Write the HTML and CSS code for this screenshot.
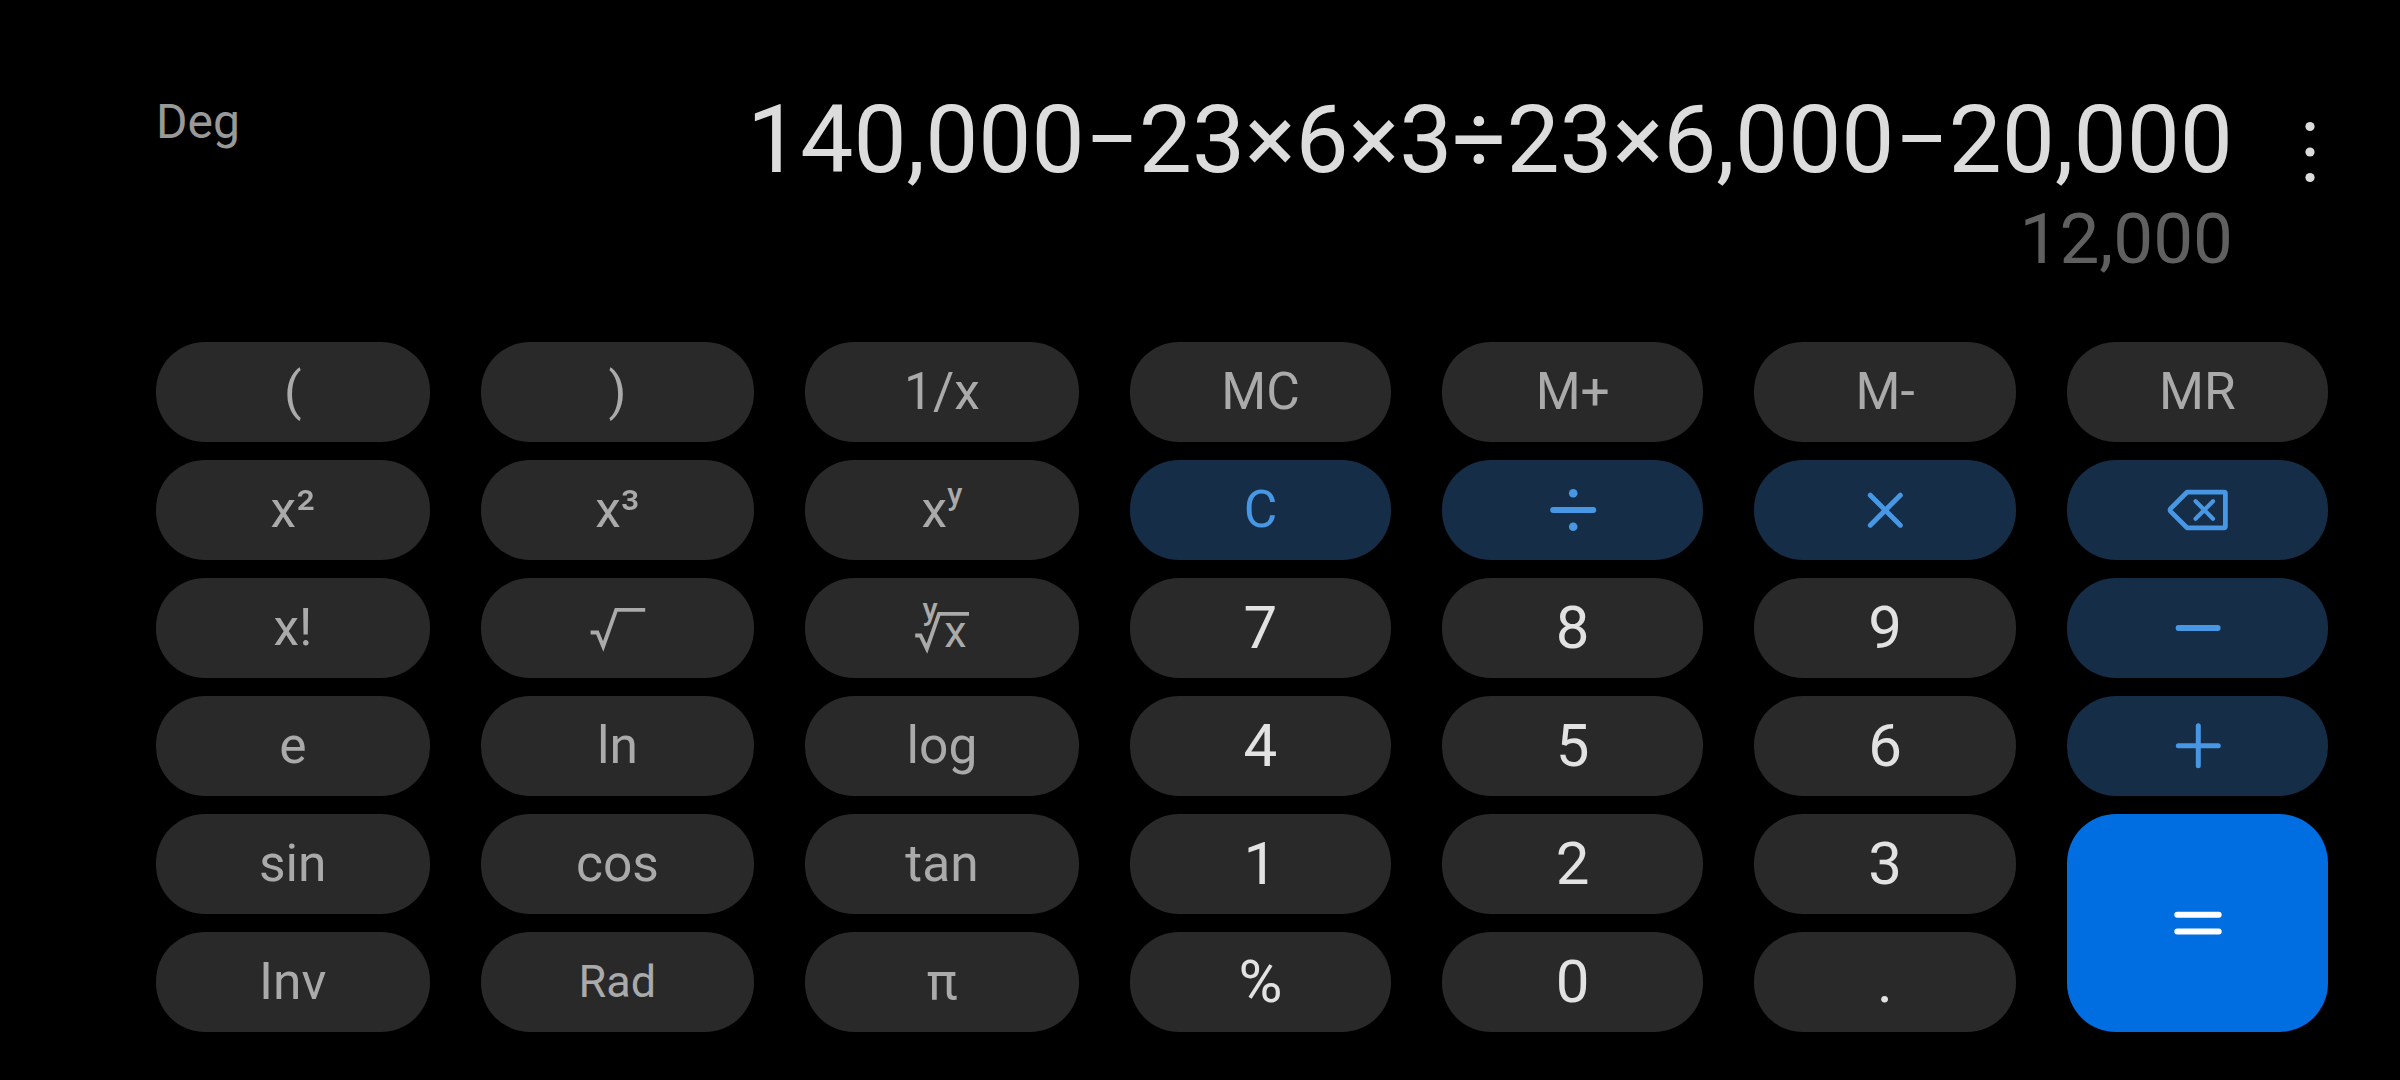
FILE: index.html
```html
<!DOCTYPE html>
<html lang="en">
<head>
  <meta charset="UTF-8">
  <meta name="viewport" content="width=device-width, initial-scale=1.0">
  <title>Calculator</title>
  <link rel="stylesheet" href="styles.css">
</head>
<body>
  <div class="calculator">
    <div class="display">
      <div class="mode">Deg</div>
      <div class="screen">
        <div class="expression">140,000−23×6×3÷23×6,000−20,000</div>
        <div class="result">12,000</div>
      </div>
      <button class="menu" aria-label="More options">
        <svg width="12" height="62" viewBox="0 0 12 62">
          <circle cx="6" cy="5.5" r="4.6"/>
          <circle cx="6" cy="31" r="4.6"/>
          <circle cx="6" cy="56.5" r="4.6"/>
        </svg>
      </button>
    </div>

    <div class="keys">
      <button class="key">(</button>
      <button class="key">)</button>
      <button class="key">1/x</button>
      <button class="key">MC</button>
      <button class="key">M+</button>
      <button class="key">M-</button>
      <button class="key">MR</button>

      <button class="key">x²</button>
      <button class="key">x³</button>
      <button class="key"><span>x<sup class="power">y</sup></span></button>
      <button class="key operator">C</button>
      <button class="key operator" aria-label="Divide">
        <svg class="icon" viewBox="0 0 64 64">
          <path d="M12.2 32h40"/>
          <circle class="dot" cx="32.2" cy="15.2" r="4.3"/>
          <circle class="dot" cx="32.2" cy="48.8" r="4.3"/>
        </svg>
      </button>
      <button class="key operator" aria-label="Multiply">
        <svg class="icon thin" viewBox="0 0 64 64">
          <path d="M17.3 17.2l30 30M47.3 17.2l-30 30"/>
        </svg>
      </button>
      <button class="key operator" aria-label="Backspace">
        <svg class="icon backspace" viewBox="0 0 64 64">
          <path d="M22 14.2h37.2a1.2 1.2 0 0 1 1.2 1.2v33.2a1.2 1.2 0 0 1-1.2 1.2H22L5.6 33.4a2 2 0 0 1 0-2.8z"/>
          <path class="cross" d="M30.6 23.3l17.4 17.4M48 23.3L30.6 40.7"/>
        </svg>
      </button>

      <button class="key">x!</button>
      <button class="key" aria-label="Square root">
        <svg class="icon root" viewBox="0 0 64 64">
          <path d="M5.6 36.5h6.8l5.8 14L31.2 13.9h29"/>
        </svg>
      </button>
      <button class="key" aria-label="Root">
        <svg class="icon root" viewBox="0 0 64 64">
          <path d="M5.2 39.5h5.3l6.4 13.2L29 17.8h30"/>
          <text class="index" x="12.4" y="24.2">y</text>
          <text class="radicand" x="34.2" y="51.3">x</text>
        </svg>
      </button>
      <button class="key digit">7</button>
      <button class="key digit">8</button>
      <button class="key digit">9</button>
      <button class="key operator" aria-label="Subtract">
        <svg class="icon" viewBox="0 0 64 64">
          <path d="M13.6 32h39"/>
        </svg>
      </button>

      <button class="key">e</button>
      <button class="key">ln</button>
      <button class="key">log</button>
      <button class="key digit">4</button>
      <button class="key digit">5</button>
      <button class="key digit">6</button>
      <button class="key operator" aria-label="Add">
        <svg class="icon thin" viewBox="0 0 64 64">
          <path d="M13.3 31.7h40M33.3 11.7v40"/>
        </svg>
      </button>

      <button class="key">sin</button>
      <button class="key">cos</button>
      <button class="key">tan</button>
      <button class="key digit">1</button>
      <button class="key digit">2</button>
      <button class="key digit">3</button>
      <button class="key equals" aria-label="Equals">
        <svg class="icon" viewBox="0 0 64 64">
          <path d="M12.3 23.8h41.4M12.3 40.4h41.4"/>
        </svg>
      </button>

      <button class="key">Inv</button>
      <button class="key rad">Rad</button>
      <button class="key">π</button>
      <button class="key digit">%</button>
      <button class="key digit">0</button>
      <button class="key digit">.</button>
    </div>
  </div>
</body>
</html>
```
FILE: styles.css
```css
* {
  box-sizing: border-box;
}
body, html {
  margin: 0;
  padding: 0;
  height: 100%;
  background-color: #000;
  font-family: Roboto, sans-serif;
  overflow: hidden;
}
button {
  margin: 0;
  padding: 0;
  border: none;
  background: none;
  font-family: inherit;
  cursor: pointer;
}
.calculator {
  width: 2400px;
  height: 1080px;
  padding: 84px 72px 48px 156px;
}
.display {
  display: flex;
  align-items: flex-start;
  height: 258px;
}
.mode {
  padding-top: 9px;
  font-size: 48px;
  line-height: 58px;
  color: #999;
}
.screen {
  flex: 1;
  text-align: right;
  color: #dcdcdc;
}
.expression {
  font-size: 94.6px;
  line-height: 111px;
  white-space: nowrap;
}
.result {
  font-size: 71px;
  line-height: 84px;
  margin-top: 2px;
  color: #606060;
}
.menu {
  display: flex;
  margin: 37px 12px 0 71px;
}
.menu svg {
  fill: #dcdcdc;
}
.keys {
  display: grid;
  grid-template-columns: repeat(3, 273.6px) repeat(4, 261.3px);
  grid-auto-rows: 100px;
  gap: 18px 51px;
}
.key {
  display: flex;
  justify-content: center;
  align-items: center;
  border-radius: 49px;
  background-color: #292929;
  color: #aaa;
  font-size: 51.5px;
  line-height: 60px;
}
.digit {
  color: #e2e2e2;
  font-size: 60px;
}
.rad {
  font-size: 45px;
}
.operator {
  background-color: #152d46;
  color: #4797e4;
}
.equals {
  grid-row: span 2;
  background-color: #006ee1;
  color: #fff;
}
.power {
  font-size: 31px;
  font-weight: 500;
  line-height: 0;
  vertical-align: 22px;
}
.icon {
  width: 64px;
  height: 64px;
  overflow: visible;
  fill: none;
  stroke: currentColor;
  stroke-width: 6;
  stroke-linecap: round;
  stroke-linejoin: round;
}
.icon .dot {
  fill: currentColor;
  stroke: none;
}
.thin {
  stroke-width: 5;
}
.backspace {
  stroke-width: 4.8;
}
.backspace .cross {
  stroke-width: 4.2;
}
.root {
  stroke-width: 3.8;
  stroke-linecap: butt;
  stroke-linejoin: miter;
}
.root text {
  fill: currentColor;
  stroke: none;
}
.index {
  font-size: 31px;
  font-weight: 500;
}
.radicand {
  font-size: 45px;
}
```
